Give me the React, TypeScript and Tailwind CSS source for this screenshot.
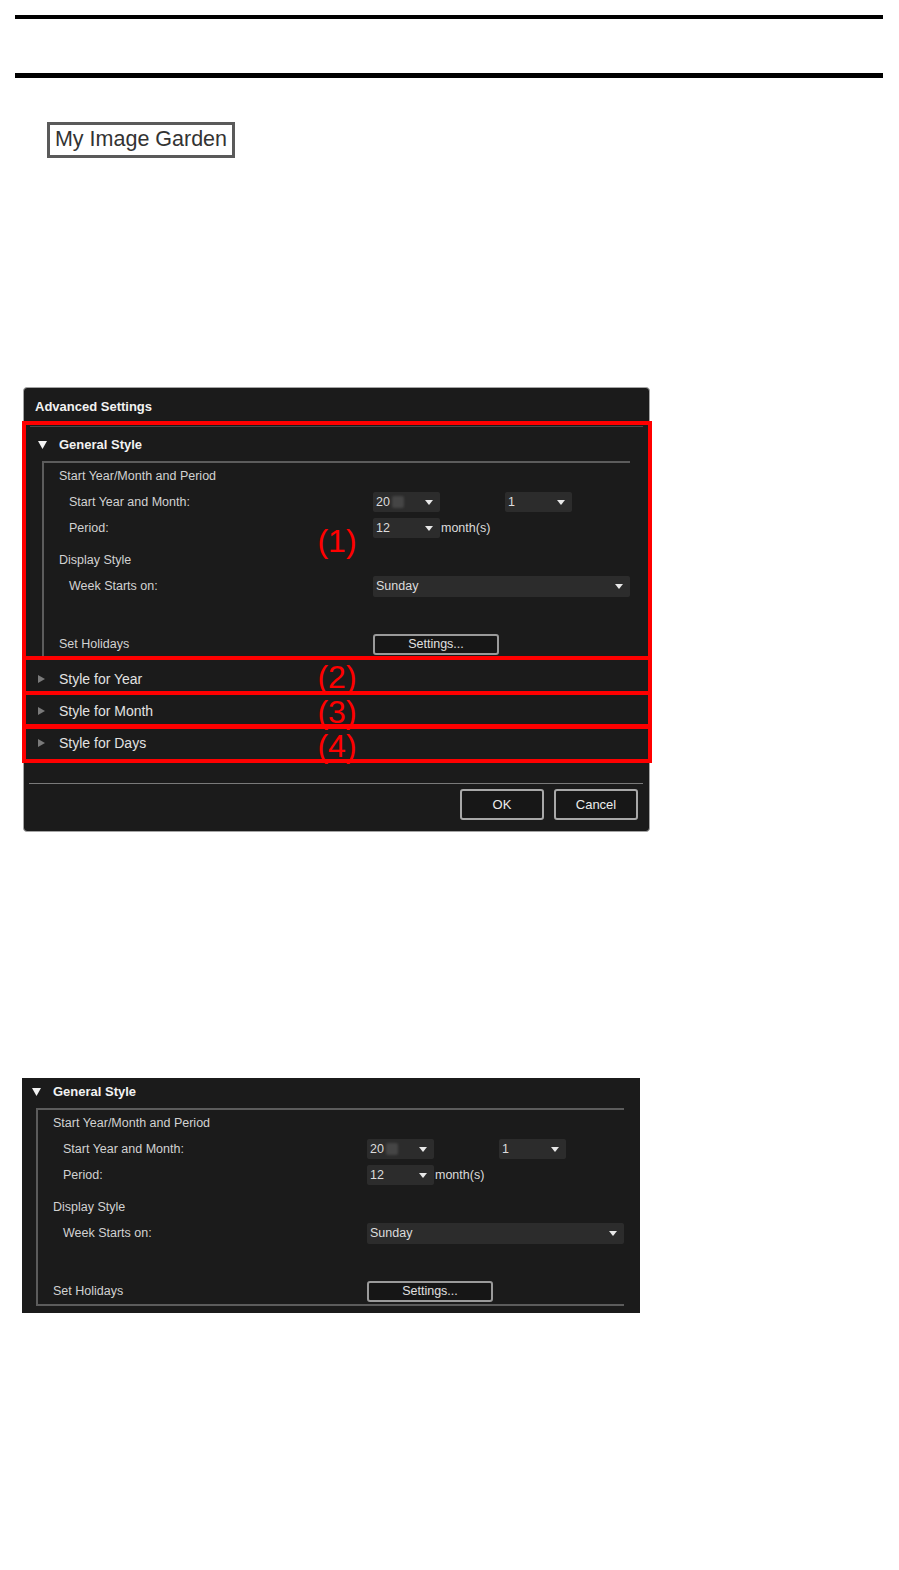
import React from 'react';

const labelText = 'text-[12.5px] text-[#d2d2d2]';

function Caret() {
  return (
    <svg width="8" height="5" viewBox="0 0 8 5" className="shrink-0">
      <path d="M0 0h8L4 5z" fill="#e8e8e8" />
    </svg>
  );
}

function Dropdown({ width, children }: { width: string; children: React.ReactNode }) {
  return (
    <div className={`${width} h-[20px] flex items-center justify-between rounded-[2px] bg-[#2c2c2c] pl-[3px] pr-[7px] text-[12.5px] text-[#dcdcdc]`}>
      <div className="flex items-center">{children}</div>
      <Caret />
    </div>
  );
}

function Row({ indent, label, children, className = '' }: { indent: boolean; label: string; children?: React.ReactNode; className?: string }) {
  return (
    <div className={`flex items-center h-[26px] ${className}`}>
      <div className={`w-[329px] shrink-0 ${indent ? 'pl-[25px]' : 'pl-[15px]'} ${labelText}`}>{label}</div>
      {children}
    </div>
  );
}

function GeneralStyle() {
  return (
    <div className="w-[618px]">
      <div className="h-[27px] flex items-center">
        <svg width="9" height="8" viewBox="0 0 9 8" className="ml-[10px]">
          <path d="M0 0h9L4.5 8z" fill="#f2f2f2" />
        </svg>
        <span className="ml-[12px] text-[13px] font-bold text-[#f2f2f2]">General Style</span>
      </div>
      <div className="mt-[3px] ml-[14px] w-[588px] border-l-2 border-t-2 border-b-2 border-[#5c5c5c]">
        <div className={`h-[26px] flex items-center pl-[15px] ${labelText}`}>Start Year/Month and Period</div>
        <Row indent label="Start Year and Month:">
          <Dropdown width="w-[67px]">
            <span>20</span>
            <span className="ml-[2px] w-[12px] h-[12px] rounded-[2px] bg-[#454545] blur-[1px]" />
          </Dropdown>
          <div className="w-[65px]" />
          <Dropdown width="w-[67px]">
            <span>1</span>
          </Dropdown>
        </Row>
        <Row indent label="Period:">
          <Dropdown width="w-[67px]">
            <span>12</span>
          </Dropdown>
          <span className="ml-[1px] text-[12.5px] text-[#dcdcdc]">month(s)</span>
        </Row>
        <Row indent={false} label="Display Style" className="mt-[6px]" />
        <Row indent label="Week Starts on:">
          <div className="h-[21px] flex">
            <Dropdown width="w-[257px] h-[21px]">
              <span>Sunday</span>
            </Dropdown>
          </div>
        </Row>
        <Row indent={false} label="Set Holidays" className="mt-[32px]">
          <button className="w-[126px] h-[21px] rounded-[3px] border-2 border-[#9a9a9a] bg-[#161616] text-[12.5px] text-[#e0e0e0] leading-none">
            Settings...
          </button>
        </Row>
      </div>
    </div>
  );
}

function CollapsedRow({ title }: { title: string }) {
  return (
    <div className="h-[32px] flex items-center">
      <svg width="7" height="8" viewBox="0 0 7 8" className="ml-[10px]">
        <path d="M0 0l7 4-7 4z" fill="#7a7a7a" />
      </svg>
      <span className="ml-[14px] text-[14px] text-[#e2e2e2]">{title}</span>
    </div>
  );
}

function DialogButton({ label }: { label: string }) {
  return (
    <button className="w-[84px] h-[31px] rounded-[3px] border-2 border-[#a8a8a8] bg-[#171717] text-[13px] text-[#ececec]">
      {label}
    </button>
  );
}

const marks = [
  { box: 'top-[33px] h-[239px]', label: 'top-[136px]', text: '(1)' },
  { box: 'top-[268px] h-[39px]', label: 'top-[272px]', text: '(2)' },
  { box: 'top-[303px] h-[38px]', label: 'top-[307px]', text: '(3)' },
  { box: 'top-[336px] h-[39px]', label: 'top-[341px]', text: '(4)' },
];

function AdvancedSettings() {
  return (
    <div className="relative ml-[23px] w-[627px] h-[445px] rounded-[4px] border border-[#a4a4a4] bg-[#1b1b1b]">
      <div className="h-[33px] flex items-center pt-[5px] pl-[11px] text-[13px] font-bold text-[#f2f2f2]">Advanced Settings</div>
      <div className="mt-[5px] mx-[6px] h-px bg-[#4a4a4a]" />
      <div className="mt-[4px] ml-[4px]">
        <GeneralStyle />
      </div>
      <div className="mt-[4px] ml-[4px]">
        <CollapsedRow title="Style for Year" />
        <CollapsedRow title="Style for Month" />
        <CollapsedRow title="Style for Days" />
      </div>
      <div className="mt-[24px] ml-[5px] mr-[6px] h-px bg-[#7a7a7a]" />
      <div className="mt-[5px] flex justify-end gap-[10px] pr-[11px]">
        <DialogButton label="OK" />
        <DialogButton label="Cancel" />
      </div>

      {marks.map((m) => (
        <React.Fragment key={m.text}>
          <div className={`absolute -left-[2px] w-[630px] border-4 border-[#ff0000] ${m.box}`} />
          <div className={`absolute left-[289px] w-[48px] h-[34px] text-center text-[32px] leading-[34px] text-[#ff0000] ${m.label}`}>
            {m.text}
          </div>
        </React.Fragment>
      ))}
    </div>
  );
}

export default function App() {
  return (
    <div className="min-h-[1570px] bg-white pt-[15px] font-['Liberation_Sans',Arial,sans-serif]">
      <div className="mx-[15px] w-[868px] h-[4px] bg-black" />
      <div className="mt-[54px] mx-[15px] w-[868px] h-[5px] bg-black" />
      <div className="mt-[44px] ml-[47px] w-[188px] h-[36px] flex items-center justify-center pb-[2px] border-[3px] border-[#5a5a5a] text-[21.5px] text-[#333333]">
        My Image Garden
      </div>
      <div className="mt-[229px]">
        <AdvancedSettings />
      </div>
      <div className="mt-[246px] ml-[22px] w-[618px] h-[235px] bg-[#1b1b1b]">
        <GeneralStyle />
      </div>
    </div>
  );
}
